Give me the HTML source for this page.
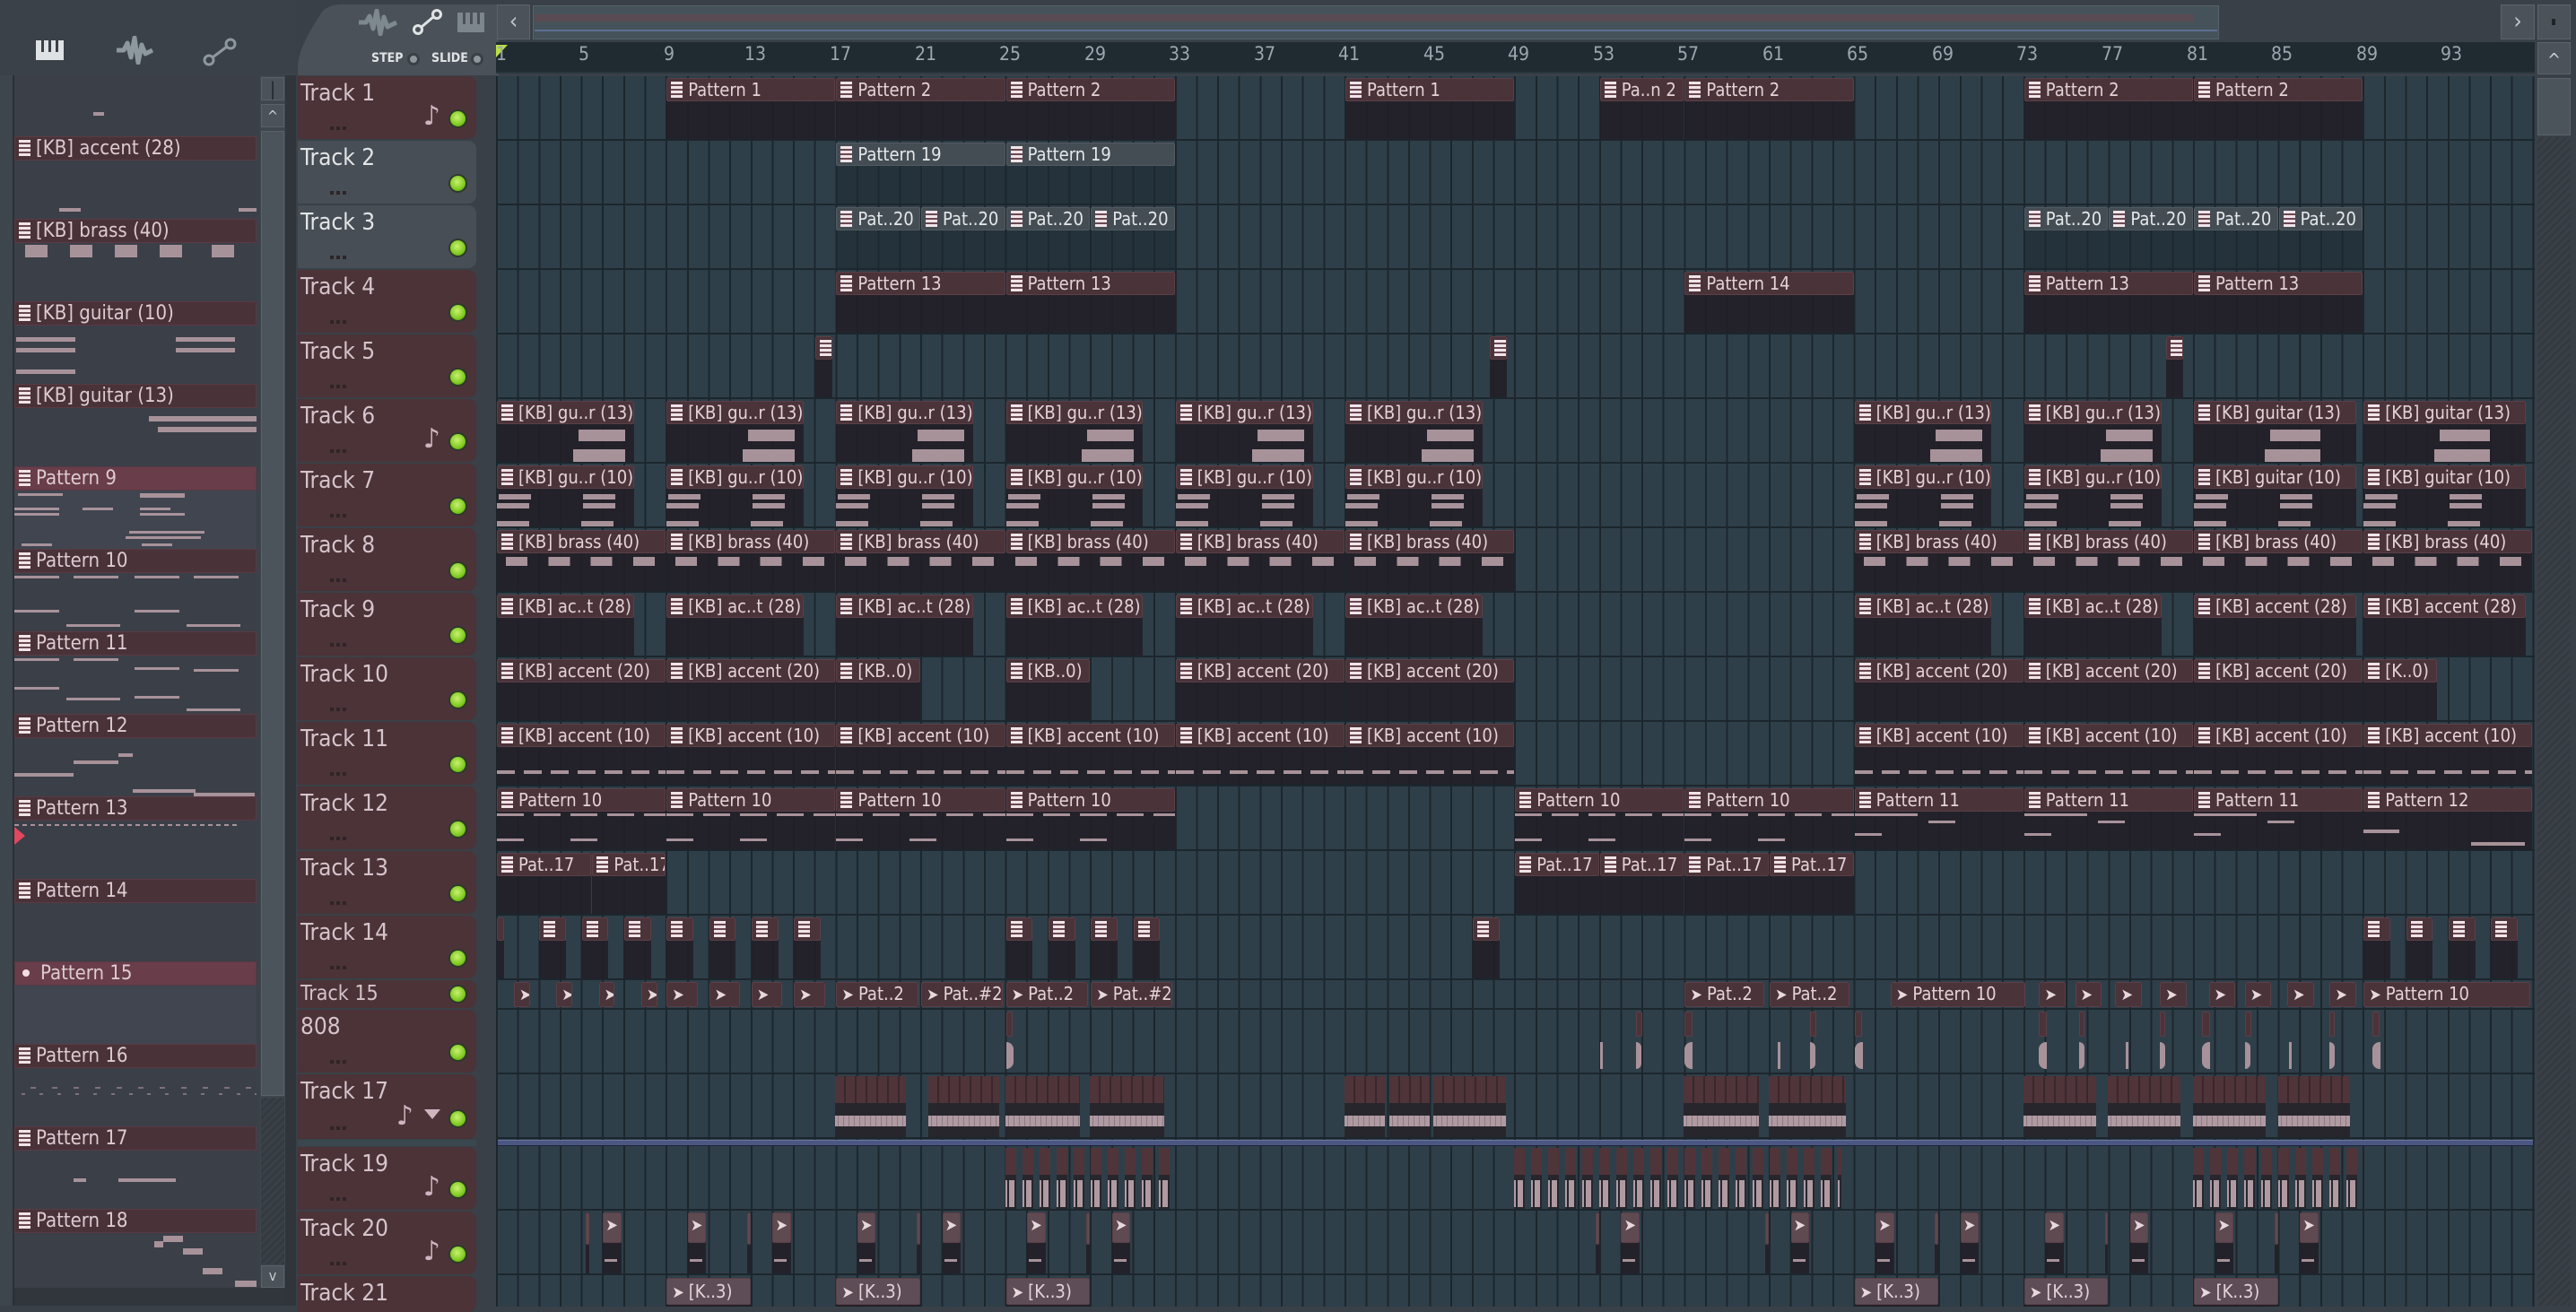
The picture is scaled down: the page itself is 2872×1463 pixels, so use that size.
<!DOCTYPE html>
<html><head><meta charset="utf-8"><style>
*{margin:0;padding:0;box-sizing:border-box}
body{width:2872px;height:1456px;overflow:hidden;background:#394047;font-family:"Liberation Sans Narrow","DejaVu Sans Condensed","Liberation Sans",sans-serif;position:relative}
.a{position:absolute}
#lp{left:0;top:0;width:330px;height:1456px;background:#3a4148}
#lstrip{left:0;top:84px;width:16px;height:1372px;background:#3e464d;border-right:2px solid #2a3036}
#list{left:16px;top:84px;width:270px;height:1352px;background:#3b3f48;overflow:hidden}
.pl{position:absolute;left:0;width:270px;height:92px}
.pl b{display:block;height:27px;background:#4a3239;border:1px solid #5a3a44;color:#dccbd2;font-weight:normal;font-size:22px;line-height:25px;white-space:nowrap}
.pl b.h{background:#693d4a}
.pl .n{position:absolute;background:#a8929a;height:5px}
.ic{display:inline-block;width:13px;height:18px;background:repeating-linear-gradient(#f0e4e8 0 3px,#6a4852 3px 5px);margin:0 6px 0 4px;vertical-align:-2px}
#lsb{left:290px;top:84px;width:28px;height:1352px;background:#3f464d}
.row{position:absolute;left:0;width:2273px;border-bottom:2px solid #1c262d}
.th{position:absolute;left:332px;width:199px;background:#4b3338;border-radius:0 9px 9px 0;color:#d5c4cb;font-size:26px;padding:4px 0 0 3px}
.th.g{background:#474e55;color:#e2e4e6}
.th .led{position:absolute;right:10px;bottom:12px;width:21px;height:21px;border-radius:50%;background:radial-gradient(circle at 45% 40%,#c8f070,#7fcb20 60%,#4e8010);border:2px solid #2e3a2a}
.th .dots{position:absolute;left:36px;bottom:10px;width:18px;height:4px;background:repeating-linear-gradient(90deg,#2f2427 0 4px,transparent 4px 7px)}
.th .nt{position:absolute;right:40px;bottom:8px;font-size:30px;color:#cdb6bf;font-family:"DejaVu Sans",sans-serif}
#grid{left:553px;top:84px;width:2273px;height:1372px;background-color:#2f3f49;background-image:repeating-linear-gradient(90deg,#1c262d 0 2px,transparent 2px 23.65px);overflow:hidden}
.c{position:absolute;left:calc((var(--b) - 1)*23.65px + 1px);width:calc(var(--w)*23.65px - 1px);top:2px;height:68px;background:rgba(34,31,38,.88)}
.c>b{display:block;height:26px;background:#4a3339;border:1px solid #5b3f47;border-radius:2px;color:#e3d3d9;font-weight:normal;font-size:20px;line-height:24px;white-space:nowrap;overflow:hidden}
.c.gr{background:rgba(30,42,50,.6)}
.c.gr>b{background:#454d54;border-color:#525a61;color:#e4e8ea}
.c>i{position:absolute;background:#a8929a;height:8px}
.sm{height:33px}
.pa{display:inline-block;margin:0 5px 0 5px;font-style:normal;color:#e6d8dc;font-size:18px}
.au{position:absolute;left:calc((var(--b) - 1)*23.65px);width:calc(var(--w)*23.65px - 2px);top:2px;height:68px;background:#27262c}
.au>b{display:block;height:30px;background:repeating-linear-gradient(90deg,#4f343a 0 10px,#3a272c 10px 12px)}
.au>i{position:absolute;left:0;right:0;top:44px;height:12px;background:repeating-linear-gradient(90deg,#b09aa2 0 3px,#8e7a82 3px 4px,#b09aa2 4px 6px)}
.rul{position:absolute;top:48px;color:#9ba7ae;font-size:21px;font-family:"Liberation Sans Narrow","DejaVu Sans Condensed",sans-serif}
</style></head><body>
<div id="lp" class="a"></div>
<div class="a" style="left:40px;top:45px;width:31px;height:22px;background:#dfe2e4"></div>
<div class="a" style="left:46px;top:45px;width:3px;height:13px;background:#394047"></div>
<div class="a" style="left:54px;top:45px;width:3px;height:13px;background:#394047"></div>
<div class="a" style="left:62px;top:45px;width:3px;height:13px;background:#394047"></div>
<svg class="a" style="left:128px;top:40px" width="44" height="32"><path d="M2 16 L10 16 L14 8 L18 24 L22 2 L26 30 L30 10 L34 20 L42 16" stroke="#8d979e" stroke-width="5" fill="none" stroke-linejoin="round"/></svg>
<svg class="a" style="left:226px;top:42px" width="40" height="32"><circle cx="7" cy="25" r="5" stroke="#8d979e" stroke-width="3" fill="none"/><circle cx="31" cy="7" r="5" stroke="#8d979e" stroke-width="3" fill="none"/><line x1="11" y1="22" x2="27" y2="10" stroke="#8d979e" stroke-width="3"/></svg>
<div id="lstrip" class="a"></div>
<div id="list" class="a">
<div class="pl" style="top:-14px"><i class="n" style="left:258px;top:2px;width:12px;height:4px"></i><i class="n" style="left:88px;top:55px;width:12px;height:4px"></i></div>
<div class="pl" style="top:68px"><b><span class="ic"></span>[KB] accent (28)</b><i class="n" style="left:50px;top:80px;width:24px;height:4px"></i><i class="n" style="left:250px;top:80px;width:20px;height:4px"></i></div>
<div class="pl" style="top:160px"><b><span class="ic"></span>[KB] brass (40)</b><i class="n" style="left:12px;top:29px;width:25px;height:14px"></i><i class="n" style="left:62px;top:29px;width:25px;height:14px"></i><i class="n" style="left:112px;top:29px;width:25px;height:14px"></i><i class="n" style="left:162px;top:29px;width:25px;height:14px"></i><i class="n" style="left:220px;top:29px;width:25px;height:14px"></i></div>
<div class="pl" style="top:252px"><b><span class="ic"></span>[KB] guitar (10)</b><i class="n" style="left:2px;top:40px;width:66px"></i><i class="n" style="left:2px;top:52px;width:66px"></i><i class="n" style="left:180px;top:40px;width:66px"></i><i class="n" style="left:180px;top:52px;width:66px"></i><i class="n" style="left:2px;top:76px;width:66px"></i></div>
<div class="pl" style="top:344px"><b><span class="ic"></span>[KB] guitar (13)</b><i class="n" style="left:150px;top:36px;width:120px;height:6px"></i><i class="n" style="left:160px;top:48px;width:110px;height:6px"></i></div>
<div class="pl" style="top:436px;background:#404550"><b class="h"><span class="ic"></span>Pattern 9</b><i class="n" style="left:4px;top:30px;width:50px;height:3px"></i><i class="n" style="left:140px;top:30px;width:50px"></i><i class="n" style="left:0px;top:46px;width:50px;height:3px"></i><i class="n" style="left:76px;top:46px;width:34px;height:3px"></i><i class="n" style="left:140px;top:46px;width:34px;height:3px"></i><i class="n" style="left:0px;top:52px;width:50px;height:3px"></i><i class="n" style="left:140px;top:52px;width:50px;height:3px"></i><i class="n" style="left:128px;top:72px;width:84px;height:3px"></i><i class="n" style="left:124px;top:78px;width:84px;height:3px"></i><i class="n" style="left:8px;top:86px;width:34px;height:3px"></i><i class="n" style="left:142px;top:86px;width:34px;height:3px"></i></div>
<div class="pl" style="top:528px"><b><span class="ic"></span>Pattern 10</b><i class="n" style="left:0;top:30px;width:50px;height:3px"></i><i class="n" style="left:66px;top:30px;width:50px;height:3px"></i><i class="n" style="left:134px;top:30px;width:50px;height:3px"></i><i class="n" style="left:200px;top:30px;width:50px;height:3px"></i><i class="n" style="left:0;top:68px;width:50px;height:3px"></i><i class="n" style="left:134px;top:68px;width:50px;height:3px"></i><i class="n" style="left:58px;top:84px;width:60px;height:3px"></i><i class="n" style="left:192px;top:84px;width:60px;height:3px"></i></div>
<div class="pl" style="top:620px"><b><span class="ic"></span>Pattern 11</b><i class="n" style="left:0;top:30px;width:50px;height:3px"></i><i class="n" style="left:66px;top:30px;width:50px;height:3px"></i><i class="n" style="left:134px;top:40px;width:50px;height:3px"></i><i class="n" style="left:200px;top:42px;width:50px;height:3px"></i><i class="n" style="left:0;top:62px;width:50px;height:3px"></i><i class="n" style="left:58px;top:74px;width:60px;height:3px"></i><i class="n" style="left:134px;top:72px;width:50px;height:3px"></i><i class="n" style="left:192px;top:86px;width:60px;height:3px"></i></div>
<div class="pl" style="top:712px"><b><span class="ic"></span>Pattern 12</b><i class="n" style="left:66px;top:52px;width:50px;height:4px"></i><i class="n" style="left:0;top:66px;width:66px;height:4px"></i><i class="n" style="left:116px;top:44px;width:16px;height:4px"></i><i class="n" style="left:132px;top:84px;width:70px;height:4px"></i><i class="n" style="left:200px;top:88px;width:68px;height:4px"></i></div>
<div class="pl" style="top:804px"><b><span class="ic"></span>Pattern 13</b><i class="n" style="left:0;top:31px;width:250px;height:2px;background:repeating-linear-gradient(90deg,#a8929a 0 5px,transparent 5px 9px)"></i></div>
<div class="pl" style="top:896px"><b><span class="ic"></span>Pattern 14</b></div>
<div class="pl" style="top:988px;background:#404550"><b class="h"><span style="display:inline-block;width:8px;height:8px;border-radius:50%;background:#f4dce4;margin:0 12px 0 8px;vertical-align:3px"></span>Pattern 15</b></div>
<div class="pl" style="top:1080px"><b><span class="ic"></span>Pattern 16</b><i class="n" style="left:0;width:270px;background:repeating-linear-gradient(90deg,transparent 0 8px,rgba(168,146,154,.6) 8px 12px,transparent 12px 20px);height:2px;top:55px"></i><i class="n" style="left:0;top:48px;width:270px;height:2px;background:repeating-linear-gradient(90deg,transparent 0 18px,rgba(168,146,154,.6) 18px 24px)"></i></div>
<div class="pl" style="top:1172px"><b><span class="ic"></span>Pattern 17</b><i class="n" style="left:66px;top:58px;width:14px;height:4px"></i><i class="n" style="left:116px;top:58px;width:64px;height:4px"></i></div>
<div class="pl" style="top:1264px"><b><span class="ic"></span>Pattern 18</b><i class="n" style="left:166px;top:30px;width:22px;height:7px"></i><i class="n" style="left:156px;top:36px;width:10px;height:7px"></i><i class="n" style="left:188px;top:44px;width:22px;height:7px"></i><i class="n" style="left:210px;top:66px;width:22px;height:7px"></i><i class="n" style="left:246px;top:80px;width:24px;height:7px"></i></div>
</div>
<div class="a" style="left:16px;top:922px;width:0;height:0;border-left:12px solid #e04860;border-top:10px solid transparent;border-bottom:10px solid transparent"></div>
<div id="lsb" class="a"></div>
<div class="a" style="left:291px;top:86px;width:26px;height:26px;background:#4b5259;border:1px solid #5a6168;color:#1e2428;text-align:center;font-size:20px;line-height:24px">|</div>
<div class="a" style="left:291px;top:116px;width:26px;height:26px;background:#4b5259;border:1px solid #5a6168;color:#c8cdd0;text-align:center;font-size:16px;line-height:26px">^</div>
<div class="a" style="left:291px;top:146px;width:26px;height:1076px;background:#4c545b;border:1px solid #5a6168"></div>
<div class="a" style="left:291px;top:1224px;width:26px;height:186px;background:repeating-linear-gradient(135deg,#3a4047 0 3px,#343a40 3px 6px)"></div>
<div class="a" style="left:291px;top:1411px;width:26px;height:25px;background:#4b5259;border:1px solid #5a6168;color:#c8cdd0;text-align:center;font-size:16px;line-height:22px">v</div>
<div class="a" style="left:318px;top:84px;width:12px;height:1372px;background:#2f353b"></div>
<div class="a" style="left:16px;top:1436px;width:302px;height:20px;background:#30363c"></div>

<svg class="a" style="left:330px;top:0" width="226" height="84"><path d="M2 84 L2 72 Q4 50 30 12 Q38 5 50 5 L226 5 L226 84 Z" fill="#4a5158"/></svg>
<svg class="a" style="left:398px;top:10px" width="46" height="30"><path d="M2 15 L10 15 L14 8 L18 22 L22 2 L26 28 L30 9 L34 20 L44 15" stroke="#7e888f" stroke-width="5" fill="none" stroke-linejoin="round"/></svg>
<svg class="a" style="left:460px;top:10px" width="34" height="30"><circle cx="6" cy="23" r="4.5" stroke="#e0e4e6" stroke-width="3" fill="none"/><circle cx="27" cy="6" r="4.5" stroke="#e0e4e6" stroke-width="3" fill="none"/><line x1="10" y1="20" x2="23" y2="9" stroke="#e0e4e6" stroke-width="3"/></svg>
<div class="a" style="left:510px;top:14px;width:30px;height:22px;background:#7d868c"></div>
<div class="a" style="left:516px;top:14px;width:3px;height:13px;background:#4a5158"></div>
<div class="a" style="left:524px;top:14px;width:3px;height:13px;background:#4a5158"></div>
<div class="a" style="left:532px;top:14px;width:3px;height:13px;background:#4a5158"></div>
<div class="a" style="left:414px;top:57px;color:#e0e3e5;font-size:14px;font-weight:bold">STEP</div>
<div class="a" style="left:454px;top:59px;width:14px;height:14px;border-radius:50%;border:3px solid #3a4046;background:#8e979d"></div>
<div class="a" style="left:481px;top:57px;color:#e0e3e5;font-size:14px;font-weight:bold">SLIDE</div>
<div class="a" style="left:525px;top:59px;width:14px;height:14px;border-radius:50%;border:3px solid #3a4046;background:#8e979d"></div>
<div class="a" style="left:554px;top:5px;width:37px;height:39px;background:#4b5259;border:1px solid #5c6369;color:#c0c6ca;font-size:26px;text-align:center;line-height:36px">‹</div>
<div class="a" style="left:594px;top:6px;width:1880px;height:38px;background:#46525a;border:1px solid #56626a"></div>
<div class="a" style="left:596px;top:16px;width:1850px;height:8px;background:#5a4a52"></div>
<div class="a" style="left:596px;top:33px;width:1876px;height:2px;background:#5d6e92"></div>
<div class="a" style="left:2788px;top:5px;width:38px;height:39px;background:#4b5259;border:1px solid #5c6369;color:#c0c6ca;font-size:26px;text-align:center;line-height:36px">›</div>
<div class="a" style="left:2829px;top:5px;width:37px;height:39px;background:#4b5259;border:1px solid #5c6369"></div>
<div class="a" style="left:2845px;top:21px;width:4px;height:7px;background:#1e2428"></div>
<div class="a" style="left:553px;top:47px;width:2273px;height:35px;background:#1f2a31;border-bottom:2px solid #2a363e"></div>
<div class="a" style="left:553px;top:50px;width:0;height:0;border-left:13px solid #b8e040;border-bottom:14px solid transparent"></div>
<div class="rul" style="left:553px">1</div><div class="rul" style="left:645px">5</div><div class="rul" style="left:740px">9</div><div class="rul" style="left:830px">13</div><div class="rul" style="left:925px">17</div><div class="rul" style="left:1020px">21</div><div class="rul" style="left:1114px">25</div><div class="rul" style="left:1209px">29</div><div class="rul" style="left:1303px">33</div><div class="rul" style="left:1398px">37</div><div class="rul" style="left:1492px">41</div><div class="rul" style="left:1587px">45</div><div class="rul" style="left:1681px">49</div><div class="rul" style="left:1776px">53</div><div class="rul" style="left:1870px">57</div><div class="rul" style="left:1965px">61</div><div class="rul" style="left:2059px">65</div><div class="rul" style="left:2154px">69</div><div class="rul" style="left:2248px">73</div><div class="rul" style="left:2343px">77</div><div class="rul" style="left:2438px">81</div><div class="rul" style="left:2532px">85</div><div class="rul" style="left:2627px">89</div><div class="rul" style="left:2721px">93</div>
<div class="a" style="left:2826px;top:46px;width:46px;height:1410px;background:#394047"></div>
<div class="a" style="left:2829px;top:47px;width:37px;height:36px;background:#4b5259;border:1px solid #5c6369;color:#c8cdd0;font-size:20px;text-align:center;line-height:38px">^</div>
<div class="a" style="left:2829px;top:87px;width:37px;height:64px;background:#4c545b;border:1px solid #5c6369"></div>
<div class="a" style="left:2829px;top:153px;width:37px;height:1303px;background:repeating-linear-gradient(135deg,#3a4047 0 3px,#343a40 3px 6px)"></div>

<div class="th" style="top:85px;height:70px">Track 1<span class="nt">♪</span><i class="dots"></i><i class="led"></i></div>
<div class="th g" style="top:157px;height:70px">Track 2<i class="dots"></i><i class="led"></i></div>
<div class="th g" style="top:229px;height:70px">Track 3<i class="dots"></i><i class="led"></i></div>
<div class="th" style="top:301px;height:70px">Track 4<i class="dots"></i><i class="led"></i></div>
<div class="th" style="top:373px;height:70px">Track 5<i class="dots"></i><i class="led"></i></div>
<div class="th" style="top:445px;height:70px">Track 6<span class="nt">♪</span><i class="dots"></i><i class="led"></i></div>
<div class="th" style="top:517px;height:70px">Track 7<i class="dots"></i><i class="led"></i></div>
<div class="th" style="top:589px;height:70px">Track 8<i class="dots"></i><i class="led"></i></div>
<div class="th" style="top:661px;height:70px">Track 9<i class="dots"></i><i class="led"></i></div>
<div class="th" style="top:733px;height:70px">Track 10<i class="dots"></i><i class="led"></i></div>
<div class="th" style="top:805px;height:70px">Track 11<i class="dots"></i><i class="led"></i></div>
<div class="th" style="top:877px;height:70px">Track 12<i class="dots"></i><i class="led"></i></div>
<div class="th" style="top:949px;height:70px">Track 13<i class="dots"></i><i class="led"></i></div>
<div class="th" style="top:1021px;height:70px">Track 14<i class="dots"></i><i class="led"></i></div>
<div class="th" style="top:1093px;height:31px;font-size:23px;padding-top:2px">Track 15<i class="led" style="bottom:5px"></i></div>
<div class="th" style="top:1126px;height:70px">808<i class="dots"></i><i class="led"></i></div>
<div class="th" style="top:1198px;height:72px">Track 17<span class="nt" style="right:70px">♪</span><span class="a" style="right:40px;bottom:22px;width:0;height:0;border-left:9px solid transparent;border-right:9px solid transparent;border-top:11px solid #cdb6bf"></span><i class="dots"></i><i class="led"></i></div>
<div class="a" style="left:332px;top:1271px;width:199px;height:7px;background:#3a474f"></div>
<div class="th" style="top:1279px;height:70px">Track 19<span class="nt">♪</span><i class="dots"></i><i class="led"></i></div>
<div class="th" style="top:1351px;height:70px">Track 20<span class="nt">♪</span><i class="dots"></i><i class="led"></i></div>
<div class="th" style="top:1423px;height:40px">Track 21</div>

<div id="grid" class="a" style="top:85px">
<div class="row" style="top:0;height:72px">
<div class="c" style="--b:9;--w:8"><b><span class="ic"></span>Pattern 1</b></div>
<div class="c" style="--b:17;--w:8"><b><span class="ic"></span>Pattern 2</b></div>
<div class="c" style="--b:25;--w:8"><b><span class="ic"></span>Pattern 2</b></div>
<div class="c" style="--b:41;--w:8"><b><span class="ic"></span>Pattern 1</b></div>
<div class="c" style="--b:53;--w:4"><b><span class="ic"></span>Pa..n 2</b></div>
<div class="c" style="--b:57;--w:8"><b><span class="ic"></span>Pattern 2</b></div>
<div class="c" style="--b:73;--w:8"><b><span class="ic"></span>Pattern 2</b></div>
<div class="c" style="--b:81;--w:8"><b><span class="ic"></span>Pattern 2</b></div>
</div>
<div class="row" style="top:72px;height:72px">
<div class="c gr" style="--b:17;--w:8"><b><span class="ic"></span>Pattern 19</b></div>
<div class="c gr" style="--b:25;--w:8"><b><span class="ic"></span>Pattern 19</b></div>
</div>
<div class="row" style="top:144px;height:72px">
<div class="c gr" style="--b:17;--w:4"><b><span class="ic"></span>Pat..20</b></div>
<div class="c gr" style="--b:21;--w:4"><b><span class="ic"></span>Pat..20</b></div>
<div class="c gr" style="--b:25;--w:4"><b><span class="ic"></span>Pat..20</b></div>
<div class="c gr" style="--b:29;--w:4"><b><span class="ic"></span>Pat..20</b></div>
<div class="c gr" style="--b:73;--w:4"><b><span class="ic"></span>Pat..20</b></div>
<div class="c gr" style="--b:77;--w:4"><b><span class="ic"></span>Pat..20</b></div>
<div class="c gr" style="--b:81;--w:4"><b><span class="ic"></span>Pat..20</b></div>
<div class="c gr" style="--b:85;--w:4"><b><span class="ic"></span>Pat..20</b></div>
</div>
<div class="row" style="top:216px;height:72px">
<div class="c" style="--b:17;--w:8"><b><span class="ic"></span>Pattern 13</b></div>
<div class="c" style="--b:25;--w:8"><b><span class="ic"></span>Pattern 13</b></div>
<div class="c" style="--b:57;--w:8"><b><span class="ic"></span>Pattern 14</b></div>
<div class="c" style="--b:73;--w:8"><b><span class="ic"></span>Pattern 13</b></div>
<div class="c" style="--b:81;--w:8"><b><span class="ic"></span>Pattern 13</b></div>
</div>
<div class="row" style="top:288px;height:72px">
<div class="c" style="--b:16;--w:0.85"><b><span class="ic"></span></b></div>
<div class="c" style="--b:47.8;--w:0.85"><b><span class="ic"></span></b></div>
<div class="c" style="--b:79.7;--w:0.85"><b><span class="ic"></span></b></div>
</div>
<div class="row" style="top:360px;height:72px">
<div class="c" style="--b:1;--w:6.5"><b><span class="ic"></span>[KB] gu..r (13)</b><i style="right:10px;top:32px;width:52px;height:13px"></i><i style="right:10px;top:54px;width:58px;height:14px"></i></div>
<div class="c" style="--b:9;--w:6.5"><b><span class="ic"></span>[KB] gu..r (13)</b><i style="right:10px;top:32px;width:52px;height:13px"></i><i style="right:10px;top:54px;width:58px;height:14px"></i></div>
<div class="c" style="--b:17;--w:6.5"><b><span class="ic"></span>[KB] gu..r (13)</b><i style="right:10px;top:32px;width:52px;height:13px"></i><i style="right:10px;top:54px;width:58px;height:14px"></i></div>
<div class="c" style="--b:25;--w:6.5"><b><span class="ic"></span>[KB] gu..r (13)</b><i style="right:10px;top:32px;width:52px;height:13px"></i><i style="right:10px;top:54px;width:58px;height:14px"></i></div>
<div class="c" style="--b:33;--w:6.5"><b><span class="ic"></span>[KB] gu..r (13)</b><i style="right:10px;top:32px;width:52px;height:13px"></i><i style="right:10px;top:54px;width:58px;height:14px"></i></div>
<div class="c" style="--b:41;--w:6.5"><b><span class="ic"></span>[KB] gu..r (13)</b><i style="right:10px;top:32px;width:52px;height:13px"></i><i style="right:10px;top:54px;width:58px;height:14px"></i></div>
<div class="c" style="--b:65;--w:6.5"><b><span class="ic"></span>[KB] gu..r (13)</b><i style="right:10px;top:32px;width:52px;height:13px"></i><i style="right:10px;top:54px;width:58px;height:14px"></i></div>
<div class="c" style="--b:73;--w:6.5"><b><span class="ic"></span>[KB] gu..r (13)</b><i style="right:10px;top:32px;width:52px;height:13px"></i><i style="right:10px;top:54px;width:58px;height:14px"></i></div>
<div class="c" style="--b:81;--w:7.7"><b><span class="ic"></span>[KB] guitar (13)</b><i style="right:40px;top:32px;width:56px;height:13px"></i><i style="right:40px;top:54px;width:62px;height:14px"></i></div>
<div class="c" style="--b:89;--w:7.7"><b><span class="ic"></span>[KB] guitar (13)</b><i style="right:40px;top:32px;width:56px;height:13px"></i><i style="right:40px;top:54px;width:62px;height:14px"></i></div>
</div>
<div class="row" style="top:432px;height:72px">
<div class="c" style="--b:1;--w:6.5"><b><span class="ic"></span>[KB] gu..r (10)</b><i style="left:2px;top:32px;width:36px;height:6px"></i><i style="left:0;top:42px;width:36px;height:6px"></i><i style="left:96px;top:32px;width:36px;height:6px"></i><i style="left:96px;top:42px;width:36px;height:6px"></i><i style="left:0;top:62px;width:36px;height:6px"></i><i style="left:94px;top:62px;width:36px;height:6px"></i></div>
<div class="c" style="--b:9;--w:6.5"><b><span class="ic"></span>[KB] gu..r (10)</b><i style="left:2px;top:32px;width:36px;height:6px"></i><i style="left:0;top:42px;width:36px;height:6px"></i><i style="left:96px;top:32px;width:36px;height:6px"></i><i style="left:96px;top:42px;width:36px;height:6px"></i><i style="left:0;top:62px;width:36px;height:6px"></i><i style="left:94px;top:62px;width:36px;height:6px"></i></div>
<div class="c" style="--b:17;--w:6.5"><b><span class="ic"></span>[KB] gu..r (10)</b><i style="left:2px;top:32px;width:36px;height:6px"></i><i style="left:0;top:42px;width:36px;height:6px"></i><i style="left:96px;top:32px;width:36px;height:6px"></i><i style="left:96px;top:42px;width:36px;height:6px"></i><i style="left:0;top:62px;width:36px;height:6px"></i><i style="left:94px;top:62px;width:36px;height:6px"></i></div>
<div class="c" style="--b:25;--w:6.5"><b><span class="ic"></span>[KB] gu..r (10)</b><i style="left:2px;top:32px;width:36px;height:6px"></i><i style="left:0;top:42px;width:36px;height:6px"></i><i style="left:96px;top:32px;width:36px;height:6px"></i><i style="left:96px;top:42px;width:36px;height:6px"></i><i style="left:0;top:62px;width:36px;height:6px"></i><i style="left:94px;top:62px;width:36px;height:6px"></i></div>
<div class="c" style="--b:33;--w:6.5"><b><span class="ic"></span>[KB] gu..r (10)</b><i style="left:2px;top:32px;width:36px;height:6px"></i><i style="left:0;top:42px;width:36px;height:6px"></i><i style="left:96px;top:32px;width:36px;height:6px"></i><i style="left:96px;top:42px;width:36px;height:6px"></i><i style="left:0;top:62px;width:36px;height:6px"></i><i style="left:94px;top:62px;width:36px;height:6px"></i></div>
<div class="c" style="--b:41;--w:6.5"><b><span class="ic"></span>[KB] gu..r (10)</b><i style="left:2px;top:32px;width:36px;height:6px"></i><i style="left:0;top:42px;width:36px;height:6px"></i><i style="left:96px;top:32px;width:36px;height:6px"></i><i style="left:96px;top:42px;width:36px;height:6px"></i><i style="left:0;top:62px;width:36px;height:6px"></i><i style="left:94px;top:62px;width:36px;height:6px"></i></div>
<div class="c" style="--b:65;--w:6.5"><b><span class="ic"></span>[KB] gu..r (10)</b><i style="left:2px;top:32px;width:36px;height:6px"></i><i style="left:0;top:42px;width:36px;height:6px"></i><i style="left:96px;top:32px;width:36px;height:6px"></i><i style="left:96px;top:42px;width:36px;height:6px"></i><i style="left:0;top:62px;width:36px;height:6px"></i><i style="left:94px;top:62px;width:36px;height:6px"></i></div>
<div class="c" style="--b:73;--w:6.5"><b><span class="ic"></span>[KB] gu..r (10)</b><i style="left:2px;top:32px;width:36px;height:6px"></i><i style="left:0;top:42px;width:36px;height:6px"></i><i style="left:96px;top:32px;width:36px;height:6px"></i><i style="left:96px;top:42px;width:36px;height:6px"></i><i style="left:0;top:62px;width:36px;height:6px"></i><i style="left:94px;top:62px;width:36px;height:6px"></i></div>
<div class="c" style="--b:81;--w:7.7"><b><span class="ic"></span>[KB] guitar (10)</b><i style="left:2px;top:32px;width:36px;height:6px"></i><i style="left:0;top:42px;width:36px;height:6px"></i><i style="left:96px;top:32px;width:36px;height:6px"></i><i style="left:96px;top:42px;width:36px;height:6px"></i><i style="left:0;top:62px;width:36px;height:6px"></i><i style="left:94px;top:62px;width:36px;height:6px"></i></div>
<div class="c" style="--b:89;--w:7.7"><b><span class="ic"></span>[KB] guitar (10)</b><i style="left:2px;top:32px;width:36px;height:6px"></i><i style="left:0;top:42px;width:36px;height:6px"></i><i style="left:96px;top:32px;width:36px;height:6px"></i><i style="left:96px;top:42px;width:36px;height:6px"></i><i style="left:0;top:62px;width:36px;height:6px"></i><i style="left:94px;top:62px;width:36px;height:6px"></i></div>
</div>
<div class="row" style="top:504px;height:72px">
<div class="c" style="--b:1;--w:8"><b><span class="ic"></span>[KB] brass (40)</b><i style="left:0;right:0;top:30px;height:10px;background:repeating-linear-gradient(90deg,transparent 0 10px,#a8929a 10px 34px,transparent 34px 47.3px)"></i></div>
<div class="c" style="--b:9;--w:8"><b><span class="ic"></span>[KB] brass (40)</b><i style="left:0;right:0;top:30px;height:10px;background:repeating-linear-gradient(90deg,transparent 0 10px,#a8929a 10px 34px,transparent 34px 47.3px)"></i></div>
<div class="c" style="--b:17;--w:8"><b><span class="ic"></span>[KB] brass (40)</b><i style="left:0;right:0;top:30px;height:10px;background:repeating-linear-gradient(90deg,transparent 0 10px,#a8929a 10px 34px,transparent 34px 47.3px)"></i></div>
<div class="c" style="--b:25;--w:8"><b><span class="ic"></span>[KB] brass (40)</b><i style="left:0;right:0;top:30px;height:10px;background:repeating-linear-gradient(90deg,transparent 0 10px,#a8929a 10px 34px,transparent 34px 47.3px)"></i></div>
<div class="c" style="--b:33;--w:8"><b><span class="ic"></span>[KB] brass (40)</b><i style="left:0;right:0;top:30px;height:10px;background:repeating-linear-gradient(90deg,transparent 0 10px,#a8929a 10px 34px,transparent 34px 47.3px)"></i></div>
<div class="c" style="--b:41;--w:8"><b><span class="ic"></span>[KB] brass (40)</b><i style="left:0;right:0;top:30px;height:10px;background:repeating-linear-gradient(90deg,transparent 0 10px,#a8929a 10px 34px,transparent 34px 47.3px)"></i></div>
<div class="c" style="--b:65;--w:8"><b><span class="ic"></span>[KB] brass (40)</b><i style="left:0;right:0;top:30px;height:10px;background:repeating-linear-gradient(90deg,transparent 0 10px,#a8929a 10px 34px,transparent 34px 47.3px)"></i></div>
<div class="c" style="--b:73;--w:8"><b><span class="ic"></span>[KB] brass (40)</b><i style="left:0;right:0;top:30px;height:10px;background:repeating-linear-gradient(90deg,transparent 0 10px,#a8929a 10px 34px,transparent 34px 47.3px)"></i></div>
<div class="c" style="--b:81;--w:8"><b><span class="ic"></span>[KB] brass (40)</b><i style="left:0;right:0;top:30px;height:10px;background:repeating-linear-gradient(90deg,transparent 0 10px,#a8929a 10px 34px,transparent 34px 47.3px)"></i></div>
<div class="c" style="--b:89;--w:8"><b><span class="ic"></span>[KB] brass (40)</b><i style="left:0;right:0;top:30px;height:10px;background:repeating-linear-gradient(90deg,transparent 0 10px,#a8929a 10px 34px,transparent 34px 47.3px)"></i></div>
</div>
<div class="row" style="top:576px;height:72px">
<div class="c" style="--b:1;--w:6.5"><b><span class="ic"></span>[KB] ac..t (28)</b></div>
<div class="c" style="--b:9;--w:6.5"><b><span class="ic"></span>[KB] ac..t (28)</b></div>
<div class="c" style="--b:17;--w:6.5"><b><span class="ic"></span>[KB] ac..t (28)</b></div>
<div class="c" style="--b:25;--w:6.5"><b><span class="ic"></span>[KB] ac..t (28)</b></div>
<div class="c" style="--b:33;--w:6.5"><b><span class="ic"></span>[KB] ac..t (28)</b></div>
<div class="c" style="--b:41;--w:6.5"><b><span class="ic"></span>[KB] ac..t (28)</b></div>
<div class="c" style="--b:65;--w:6.5"><b><span class="ic"></span>[KB] ac..t (28)</b></div>
<div class="c" style="--b:73;--w:6.5"><b><span class="ic"></span>[KB] ac..t (28)</b></div>
<div class="c" style="--b:81;--w:7.7"><b><span class="ic"></span>[KB] accent (28)</b></div>
<div class="c" style="--b:89;--w:7.7"><b><span class="ic"></span>[KB] accent (28)</b></div>
</div>
<div class="row" style="top:648px;height:72px">
<div class="c" style="--b:1;--w:8"><b><span class="ic"></span>[KB] accent (20)</b></div>
<div class="c" style="--b:9;--w:8"><b><span class="ic"></span>[KB] accent (20)</b></div>
<div class="c" style="--b:17;--w:4"><b><span class="ic"></span>[KB..0)</b></div>
<div class="c" style="--b:25;--w:4"><b><span class="ic"></span>[KB..0)</b></div>
<div class="c" style="--b:33;--w:8"><b><span class="ic"></span>[KB] accent (20)</b></div>
<div class="c" style="--b:41;--w:8"><b><span class="ic"></span>[KB] accent (20)</b></div>
<div class="c" style="--b:65;--w:8"><b><span class="ic"></span>[KB] accent (20)</b></div>
<div class="c" style="--b:73;--w:8"><b><span class="ic"></span>[KB] accent (20)</b></div>
<div class="c" style="--b:81;--w:8"><b><span class="ic"></span>[KB] accent (20)</b></div>
<div class="c" style="--b:89;--w:3.5"><b><span class="ic"></span>[K..0)</b></div>
</div>
<div class="row" style="top:720px;height:72px">
<div class="c" style="--b:1;--w:8"><b><span class="ic"></span>[KB] accent (10)</b><i style="left:0;right:0;top:52px;height:4px;background:repeating-linear-gradient(90deg,#a8929a 0 20px,transparent 20px 30px)"></i></div>
<div class="c" style="--b:9;--w:8"><b><span class="ic"></span>[KB] accent (10)</b><i style="left:0;right:0;top:52px;height:4px;background:repeating-linear-gradient(90deg,#a8929a 0 20px,transparent 20px 30px)"></i></div>
<div class="c" style="--b:17;--w:8"><b><span class="ic"></span>[KB] accent (10)</b><i style="left:0;right:0;top:52px;height:4px;background:repeating-linear-gradient(90deg,#a8929a 0 20px,transparent 20px 30px)"></i></div>
<div class="c" style="--b:25;--w:8"><b><span class="ic"></span>[KB] accent (10)</b><i style="left:0;right:0;top:52px;height:4px;background:repeating-linear-gradient(90deg,#a8929a 0 20px,transparent 20px 30px)"></i></div>
<div class="c" style="--b:33;--w:8"><b><span class="ic"></span>[KB] accent (10)</b><i style="left:0;right:0;top:52px;height:4px;background:repeating-linear-gradient(90deg,#a8929a 0 20px,transparent 20px 30px)"></i></div>
<div class="c" style="--b:41;--w:8"><b><span class="ic"></span>[KB] accent (10)</b><i style="left:0;right:0;top:52px;height:4px;background:repeating-linear-gradient(90deg,#a8929a 0 20px,transparent 20px 30px)"></i></div>
<div class="c" style="--b:65;--w:8"><b><span class="ic"></span>[KB] accent (10)</b><i style="left:0;right:0;top:52px;height:4px;background:repeating-linear-gradient(90deg,#a8929a 0 20px,transparent 20px 30px)"></i></div>
<div class="c" style="--b:73;--w:8"><b><span class="ic"></span>[KB] accent (10)</b><i style="left:0;right:0;top:52px;height:4px;background:repeating-linear-gradient(90deg,#a8929a 0 20px,transparent 20px 30px)"></i></div>
<div class="c" style="--b:81;--w:8"><b><span class="ic"></span>[KB] accent (10)</b><i style="left:0;right:0;top:52px;height:4px;background:repeating-linear-gradient(90deg,#a8929a 0 20px,transparent 20px 30px)"></i></div>
<div class="c" style="--b:89;--w:8"><b><span class="ic"></span>[KB] accent (10)</b><i style="left:0;right:0;top:52px;height:4px;background:repeating-linear-gradient(90deg,#a8929a 0 20px,transparent 20px 30px)"></i></div>
</div>
<div class="row" style="top:792px;height:72px">
<div class="c" style="--b:1;--w:8"><b><span class="ic"></span>Pattern 10</b><i style="left:0;right:0;top:28px;height:3px;background:repeating-linear-gradient(90deg,#a8929a 0 30px,transparent 30px 41px)"></i><i style="left:0;width:30px;top:56px;height:3px"></i><i style="left:82px;width:30px;top:56px;height:3px"></i></div>
<div class="c" style="--b:9;--w:8"><b><span class="ic"></span>Pattern 10</b><i style="left:0;right:0;top:28px;height:3px;background:repeating-linear-gradient(90deg,#a8929a 0 30px,transparent 30px 41px)"></i><i style="left:0;width:30px;top:56px;height:3px"></i><i style="left:82px;width:30px;top:56px;height:3px"></i></div>
<div class="c" style="--b:17;--w:8"><b><span class="ic"></span>Pattern 10</b><i style="left:0;right:0;top:28px;height:3px;background:repeating-linear-gradient(90deg,#a8929a 0 30px,transparent 30px 41px)"></i><i style="left:0;width:30px;top:56px;height:3px"></i><i style="left:82px;width:30px;top:56px;height:3px"></i></div>
<div class="c" style="--b:25;--w:8"><b><span class="ic"></span>Pattern 10</b><i style="left:0;right:0;top:28px;height:3px;background:repeating-linear-gradient(90deg,#a8929a 0 30px,transparent 30px 41px)"></i><i style="left:0;width:30px;top:56px;height:3px"></i><i style="left:82px;width:30px;top:56px;height:3px"></i></div>
<div class="c" style="--b:49;--w:8"><b><span class="ic"></span>Pattern 10</b><i style="left:0;right:0;top:28px;height:3px;background:repeating-linear-gradient(90deg,#a8929a 0 30px,transparent 30px 41px)"></i><i style="left:0;width:30px;top:56px;height:3px"></i><i style="left:82px;width:30px;top:56px;height:3px"></i></div>
<div class="c" style="--b:57;--w:8"><b><span class="ic"></span>Pattern 10</b><i style="left:0;right:0;top:28px;height:3px;background:repeating-linear-gradient(90deg,#a8929a 0 30px,transparent 30px 41px)"></i><i style="left:0;width:30px;top:56px;height:3px"></i><i style="left:82px;width:30px;top:56px;height:3px"></i></div>
<div class="c" style="--b:65;--w:8"><b><span class="ic"></span>Pattern 11</b><i style="left:0;width:70px;top:28px;height:3px"></i><i style="left:82px;width:30px;top:36px;height:3px"></i><i style="left:0;width:30px;top:50px;height:3px"></i></div>
<div class="c" style="--b:73;--w:8"><b><span class="ic"></span>Pattern 11</b><i style="left:0;width:70px;top:28px;height:3px"></i><i style="left:82px;width:30px;top:36px;height:3px"></i><i style="left:0;width:30px;top:50px;height:3px"></i></div>
<div class="c" style="--b:81;--w:8"><b><span class="ic"></span>Pattern 11</b><i style="left:0;width:70px;top:28px;height:3px"></i><i style="left:82px;width:30px;top:36px;height:3px"></i><i style="left:0;width:30px;top:50px;height:3px"></i></div>
<div class="c" style="--b:89;--w:8"><b><span class="ic"></span>Pattern 12</b><i style="left:0;width:40px;top:46px;height:4px"></i><i style="left:120px;width:60px;top:60px;height:4px"></i></div>
</div>
<div class="row" style="top:864px;height:72px">
<div class="c" style="--b:1;--w:4.5"><b><span class="ic"></span>Pat..17</b></div>
<div class="c" style="--b:5.5;--w:3.5"><b><span class="ic"></span>Pat..17</b></div>
<div class="c" style="--b:49;--w:4"><b><span class="ic"></span>Pat..17</b></div>
<div class="c" style="--b:53;--w:4"><b><span class="ic"></span>Pat..17</b></div>
<div class="c" style="--b:57;--w:4"><b><span class="ic"></span>Pat..17</b></div>
<div class="c" style="--b:61;--w:4"><b><span class="ic"></span>Pat..17</b></div>
</div>
<div class="row" style="top:936px;height:72px">
<div class="c" style="--b:1;--w:0.4"><b></b></div>
<div class="c" style="--b:3;--w:1.3"><b><span class="ic"></span></b></div>
<div class="c" style="--b:5;--w:1.3"><b><span class="ic"></span></b></div>
<div class="c" style="--b:7;--w:1.3"><b><span class="ic"></span></b></div>
<div class="c" style="--b:9;--w:1.3"><b><span class="ic"></span></b></div>
<div class="c" style="--b:11;--w:1.3"><b><span class="ic"></span></b></div>
<div class="c" style="--b:13;--w:1.3"><b><span class="ic"></span></b></div>
<div class="c" style="--b:15;--w:1.3"><b><span class="ic"></span></b></div>
<div class="c" style="--b:25;--w:1.3"><b><span class="ic"></span></b></div>
<div class="c" style="--b:27;--w:1.3"><b><span class="ic"></span></b></div>
<div class="c" style="--b:29;--w:1.3"><b><span class="ic"></span></b></div>
<div class="c" style="--b:31;--w:1.3"><b><span class="ic"></span></b></div>
<div class="c" style="--b:47;--w:1.3"><b><span class="ic"></span></b></div>
<div class="c" style="--b:89;--w:1.3"><b><span class="ic"></span></b></div>
<div class="c" style="--b:91;--w:1.3"><b><span class="ic"></span></b></div>
<div class="c" style="--b:93;--w:1.3"><b><span class="ic"></span></b></div>
<div class="c" style="--b:95;--w:1.3"><b><span class="ic"></span></b></div>
</div>
<div class="row" style="top:1008px;height:33px">
<div class="c sm" style="--b:1.8;--w:0.8;height:28px"><b style="height:28px"><i class="pa">➤</i></b></div>
<div class="c sm" style="--b:3.8;--w:0.8;height:28px"><b style="height:28px"><i class="pa">➤</i></b></div>
<div class="c sm" style="--b:5.8;--w:0.8;height:28px"><b style="height:28px"><i class="pa">➤</i></b></div>
<div class="c sm" style="--b:7.8;--w:0.8;height:28px"><b style="height:28px"><i class="pa">➤</i></b></div>
<div class="c sm" style="--b:9;--w:1.5;height:28px"><b style="height:28px"><i class="pa">➤</i></b></div>
<div class="c sm" style="--b:11;--w:1.5;height:28px"><b style="height:28px"><i class="pa">➤</i></b></div>
<div class="c sm" style="--b:13;--w:1.5;height:28px"><b style="height:28px"><i class="pa">➤</i></b></div>
<div class="c sm" style="--b:15;--w:1.5;height:28px"><b style="height:28px"><i class="pa">➤</i></b></div>
<div class="c sm" style="--b:17;--w:3.9;height:28px"><b style="height:28px"><i class="pa">➤</i>Pat..2</b></div>
<div class="c sm" style="--b:21;--w:3.9;height:28px"><b style="height:28px"><i class="pa">➤</i>Pat..#2</b></div>
<div class="c sm" style="--b:25;--w:3.9;height:28px"><b style="height:28px"><i class="pa">➤</i>Pat..2</b></div>
<div class="c sm" style="--b:29;--w:3.9;height:28px"><b style="height:28px"><i class="pa">➤</i>Pat..#2</b></div>
<div class="c sm" style="--b:57;--w:3.8;height:28px"><b style="height:28px"><i class="pa">➤</i>Pat..2</b></div>
<div class="c sm" style="--b:61;--w:3.8;height:28px"><b style="height:28px"><i class="pa">➤</i>Pat..2</b></div>
<div class="c sm" style="--b:66.7;--w:6.4;height:28px"><b style="height:28px"><i class="pa">➤</i>Pattern 10</b></div>
<div class="c sm" style="--b:73.7;--w:1.3;height:28px"><b style="height:28px"><i class="pa">➤</i></b></div>
<div class="c sm" style="--b:75.4;--w:1.3;height:28px"><b style="height:28px"><i class="pa">➤</i></b></div>
<div class="c sm" style="--b:77.3;--w:1.3;height:28px"><b style="height:28px"><i class="pa">➤</i></b></div>
<div class="c sm" style="--b:79.4;--w:1.3;height:28px"><b style="height:28px"><i class="pa">➤</i></b></div>
<div class="c sm" style="--b:81.7;--w:1.3;height:28px"><b style="height:28px"><i class="pa">➤</i></b></div>
<div class="c sm" style="--b:83.4;--w:1.3;height:28px"><b style="height:28px"><i class="pa">➤</i></b></div>
<div class="c sm" style="--b:85.4;--w:1.3;height:28px"><b style="height:28px"><i class="pa">➤</i></b></div>
<div class="c sm" style="--b:87.4;--w:1.3;height:28px"><b style="height:28px"><i class="pa">➤</i></b></div>
<div class="c sm" style="--b:89;--w:7.9;height:28px"><b style="height:28px"><i class="pa">➤</i>Pattern 10</b></div>
</div>
<div class="row" style="top:1041px;height:72px">
<div class="c" style="--b:25;--w:0.35;background:transparent"><b style="height:28px"></b><i style="top:34px;height:30px;width:8px;border-radius:0 8px 8px 0"></i></div>
<div class="c" style="--b:53;--w:0.15;background:transparent"><i style="top:34px;height:30px;width:3px"></i></div>
<div class="c" style="--b:54.7;--w:0.35;background:transparent"><b style="height:28px"></b><i style="top:34px;height:30px;width:6px;border-radius:0 8px 8px 0"></i></div>
<div class="c" style="--b:57;--w:0.4;background:transparent"><b style="height:28px"></b><i style="top:34px;height:30px;width:9px;border-radius:8px 0 0 8px"></i></div>
<div class="c" style="--b:61.4;--w:0.15;background:transparent"><i style="top:34px;height:30px;width:3px"></i></div>
<div class="c" style="--b:62.9;--w:0.35;background:transparent"><b style="height:28px"></b><i style="top:34px;height:30px;width:6px;border-radius:0 8px 8px 0"></i></div>
<div class="c" style="--b:65;--w:0.4;background:transparent"><b style="height:28px"></b><i style="top:34px;height:30px;width:9px;border-radius:8px 0 0 8px"></i></div>
<div class="c" style="--b:73.7;--w:0.4;background:transparent"><b style="height:28px"></b><i style="top:34px;height:30px;width:9px;border-radius:8px 0 0 8px"></i></div>
<div class="c" style="--b:75.6;--w:0.3;background:transparent"><b style="height:28px"></b><i style="top:34px;height:30px;width:6px;border-radius:0 8px 8px 0"></i></div>
<div class="c" style="--b:77.8;--w:0.15;background:transparent"><i style="top:34px;height:30px;width:3px"></i></div>
<div class="c" style="--b:79.4;--w:0.3;background:transparent"><b style="height:28px"></b><i style="top:34px;height:30px;width:6px;border-radius:0 8px 8px 0"></i></div>
<div class="c" style="--b:81.4;--w:0.4;background:transparent"><b style="height:28px"></b><i style="top:34px;height:30px;width:9px;border-radius:8px 0 0 8px"></i></div>
<div class="c" style="--b:83.4;--w:0.35;background:transparent"><b style="height:28px"></b><i style="top:34px;height:30px;width:6px;border-radius:0 8px 8px 0"></i></div>
<div class="c" style="--b:85.5;--w:0.15;background:transparent"><i style="top:34px;height:30px;width:3px"></i></div>
<div class="c" style="--b:87.4;--w:0.3;background:transparent"><b style="height:28px"></b><i style="top:34px;height:30px;width:6px;border-radius:0 8px 8px 0"></i></div>
<div class="c" style="--b:89.4;--w:0.4;background:transparent"><b style="height:28px"></b><i style="top:34px;height:30px;width:9px;border-radius:8px 0 0 8px"></i></div>
</div>
<div class="row" style="top:1113px;height:72px">
<div class="au" style="--b:17;--w:3.4"><b></b><i></i></div>
<div class="au" style="--b:21.4;--w:3.4"><b></b><i></i></div>
<div class="au" style="--b:25;--w:3.6"><b></b><i></i></div>
<div class="au" style="--b:29;--w:3.6"><b></b><i></i></div>
<div class="au" style="--b:41;--w:2"><b></b><i></i></div>
<div class="au" style="--b:43.1;--w:2"><b></b><i></i></div>
<div class="au" style="--b:45.2;--w:3.5"><b></b><i></i></div>
<div class="au" style="--b:57;--w:3.6"><b></b><i></i></div>
<div class="au" style="--b:61;--w:3.7"><b></b><i></i></div>
<div class="au" style="--b:73;--w:3.5"><b></b><i></i></div>
<div class="au" style="--b:77;--w:3.5"><b></b><i></i></div>
<div class="au" style="--b:81;--w:3.5"><b></b><i></i></div>
<div class="au" style="--b:85;--w:3.5"><b></b><i></i></div>
</div>
<div class="a" style="left:2px;top:1186px;width:2269px;height:7px;background:#4b5782;border-top:1px solid #6a76a0;border-bottom:1px solid #1e2438"></div>
<div class="row" style="top:1193px;height:72px">
<div class="au" style="--b:25;--w:8;background:repeating-linear-gradient(90deg,#27262c 0 12px,transparent 12px 19px)"><b style="background:repeating-linear-gradient(90deg,#4f343a 0 12px,transparent 12px 19px)"></b><i style="top:36px;height:30px;background:repeating-linear-gradient(90deg,#b09aa2 0 2px,transparent 2px 4px,#b09aa2 4px 10px,transparent 10px 19px)"></i></div>
<div class="au" style="--b:49;--w:15.5;background:repeating-linear-gradient(90deg,#27262c 0 12px,transparent 12px 19px)"><b style="background:repeating-linear-gradient(90deg,#4f343a 0 12px,transparent 12px 19px)"></b><i style="top:36px;height:30px;background:repeating-linear-gradient(90deg,#b09aa2 0 2px,transparent 2px 4px,#b09aa2 4px 10px,transparent 10px 19px)"></i></div>
<div class="au" style="--b:81;--w:8;background:repeating-linear-gradient(90deg,#27262c 0 12px,transparent 12px 19px)"><b style="background:repeating-linear-gradient(90deg,#4f343a 0 12px,transparent 12px 19px)"></b><i style="top:36px;height:30px;background:repeating-linear-gradient(90deg,#b09aa2 0 2px,transparent 2px 4px,#b09aa2 4px 10px,transparent 10px 19px)"></i></div>
</div>
<div class="row" style="top:1265px;height:72px">
<div class="c" style="--b:5.2;--w:0.2"><b style="height:36px;background:#5e4a50"></b></div>
<div class="c" style="--b:6;--w:0.9"><b style="height:34px;background:#5e4a50"><i class="pa" style="margin:0 2px">➤</i></b><i style="top:52px;height:3px;left:2px;width:14px"></i></div>
<div class="c" style="--b:10;--w:0.9"><b style="height:34px;background:#5e4a50"><i class="pa" style="margin:0 2px">➤</i></b><i style="top:52px;height:3px;left:2px;width:14px"></i></div>
<div class="c" style="--b:12.8;--w:0.2"><b style="height:36px;background:#5e4a50"></b></div>
<div class="c" style="--b:14;--w:0.9"><b style="height:34px;background:#5e4a50"><i class="pa" style="margin:0 2px">➤</i></b><i style="top:52px;height:3px;left:2px;width:14px"></i></div>
<div class="c" style="--b:18;--w:0.9"><b style="height:34px;background:#5e4a50"><i class="pa" style="margin:0 2px">➤</i></b><i style="top:52px;height:3px;left:2px;width:14px"></i></div>
<div class="c" style="--b:20.8;--w:0.2"><b style="height:36px;background:#5e4a50"></b></div>
<div class="c" style="--b:22;--w:0.9"><b style="height:34px;background:#5e4a50"><i class="pa" style="margin:0 2px">➤</i></b><i style="top:52px;height:3px;left:2px;width:14px"></i></div>
<div class="c" style="--b:26;--w:0.9"><b style="height:34px;background:#5e4a50"><i class="pa" style="margin:0 2px">➤</i></b><i style="top:52px;height:3px;left:2px;width:14px"></i></div>
<div class="c" style="--b:28.8;--w:0.2"><b style="height:36px;background:#5e4a50"></b></div>
<div class="c" style="--b:30;--w:0.9"><b style="height:34px;background:#5e4a50"><i class="pa" style="margin:0 2px">➤</i></b><i style="top:52px;height:3px;left:2px;width:14px"></i></div>
<div class="c" style="--b:52.8;--w:0.2"><b style="height:36px;background:#5e4a50"></b></div>
<div class="c" style="--b:54;--w:0.9"><b style="height:34px;background:#5e4a50"><i class="pa" style="margin:0 2px">➤</i></b><i style="top:52px;height:3px;left:2px;width:14px"></i></div>
<div class="c" style="--b:60.8;--w:0.2"><b style="height:36px;background:#5e4a50"></b></div>
<div class="c" style="--b:62;--w:0.9"><b style="height:34px;background:#5e4a50"><i class="pa" style="margin:0 2px">➤</i></b><i style="top:52px;height:3px;left:2px;width:14px"></i></div>
<div class="c" style="--b:66;--w:0.9"><b style="height:34px;background:#5e4a50"><i class="pa" style="margin:0 2px">➤</i></b><i style="top:52px;height:3px;left:2px;width:14px"></i></div>
<div class="c" style="--b:68.8;--w:0.2"><b style="height:36px;background:#5e4a50"></b></div>
<div class="c" style="--b:70;--w:0.9"><b style="height:34px;background:#5e4a50"><i class="pa" style="margin:0 2px">➤</i></b><i style="top:52px;height:3px;left:2px;width:14px"></i></div>
<div class="c" style="--b:74;--w:0.9"><b style="height:34px;background:#5e4a50"><i class="pa" style="margin:0 2px">➤</i></b><i style="top:52px;height:3px;left:2px;width:14px"></i></div>
<div class="c" style="--b:76.8;--w:0.2"><b style="height:36px;background:#5e4a50"></b></div>
<div class="c" style="--b:78;--w:0.9"><b style="height:34px;background:#5e4a50"><i class="pa" style="margin:0 2px">➤</i></b><i style="top:52px;height:3px;left:2px;width:14px"></i></div>
<div class="c" style="--b:82;--w:0.9"><b style="height:34px;background:#5e4a50"><i class="pa" style="margin:0 2px">➤</i></b><i style="top:52px;height:3px;left:2px;width:14px"></i></div>
<div class="c" style="--b:84.8;--w:0.2"><b style="height:36px;background:#5e4a50"></b></div>
<div class="c" style="--b:86;--w:0.9"><b style="height:34px;background:#5e4a50"><i class="pa" style="margin:0 2px">➤</i></b><i style="top:52px;height:3px;left:2px;width:14px"></i></div>
</div>
<div class="row" style="top:1337px;height:40px;border:0">
<div class="c" style="--b:9;--w:4;top:3px"><b style="background:#5e4d57;height:30px;line-height:28px"><i class="pa">➤</i>[K..3)</b></div>
<div class="c" style="--b:17;--w:4;top:3px"><b style="background:#5e4d57;height:30px;line-height:28px"><i class="pa">➤</i>[K..3)</b></div>
<div class="c" style="--b:25;--w:4;top:3px"><b style="background:#5e4d57;height:30px;line-height:28px"><i class="pa">➤</i>[K..3)</b></div>
<div class="c" style="--b:65;--w:4;top:3px"><b style="background:#5e4d57;height:30px;line-height:28px"><i class="pa">➤</i>[K..3)</b></div>
<div class="c" style="--b:73;--w:4;top:3px"><b style="background:#5e4d57;height:30px;line-height:28px"><i class="pa">➤</i>[K..3)</b></div>
<div class="c" style="--b:81;--w:4;top:3px"><b style="background:#5e4d57;height:30px;line-height:28px"><i class="pa">➤</i>[K..3)</b></div>
</div>
</div>
</body></html>
